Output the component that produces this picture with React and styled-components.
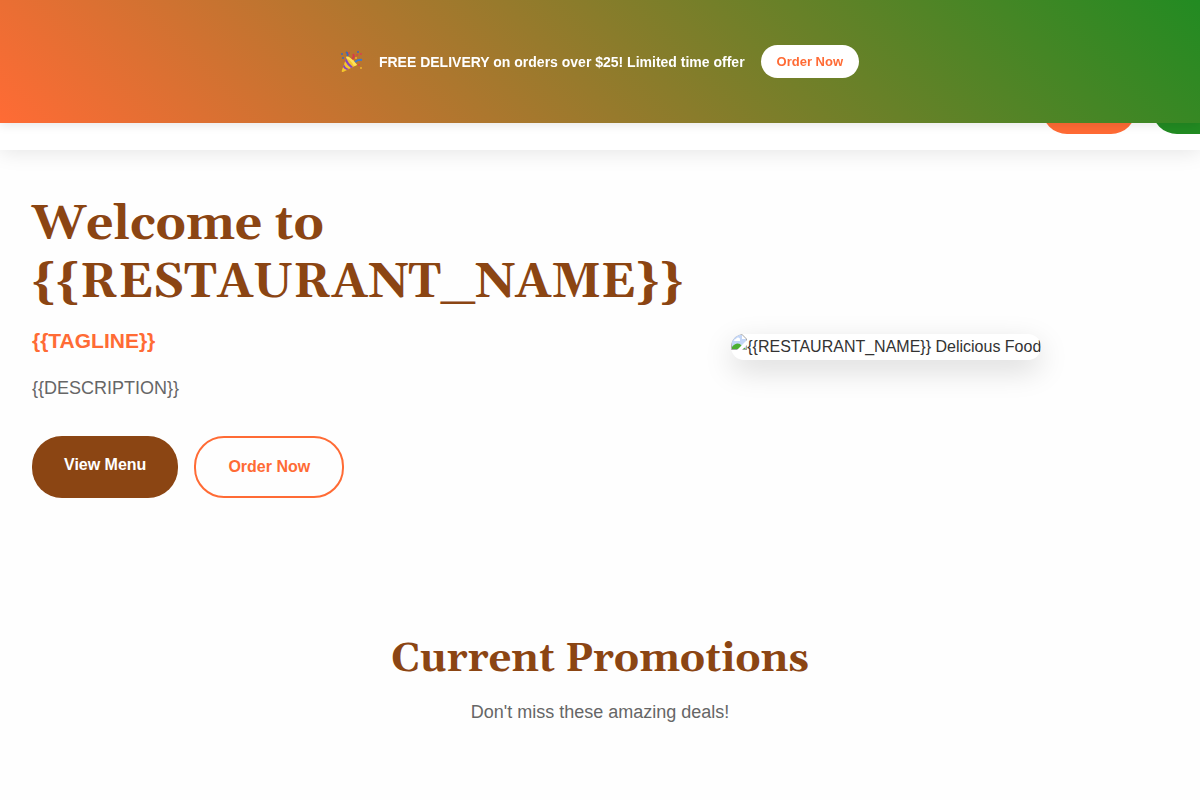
import React from "react";
import styled, { createGlobalStyle } from "styled-components";

const GlobalStyle = createGlobalStyle`
  * {
    box-sizing: border-box;
    margin: 0;
    padding: 0;
  }

  body {
    font-family: "Liberation Sans", Arial, sans-serif;
    font-size: 16px;
    line-height: 26px;
    color: #333;
    background: #fefefe;
    overflow-x: hidden;
  }
`;

const serif = `Georgia, Gelasio, "Liberation Serif", serif`;

const PromoBanner = styled.aside`
  position: fixed;
  top: 0;
  left: 0;
  right: 0;
  z-index: 20;
  display: flex;
  align-items: center;
  justify-content: center;
  gap: 16px;
  padding: 45px 16px;
  color: #fff;
  background: linear-gradient(45deg, #ff6b35, #228b22);
  box-shadow: 0 2px 10px rgba(0, 0, 0, 0.1);
`;

const PromoIcon = styled.svg`
  flex: none;
  width: 22px;
  height: 24px;
`;

const PromoText = styled.p`
  font-size: 14px;
  line-height: 24px;
  font-weight: 700;
`;

const PromoLink = styled.a`
  padding: 6px 16px;
  border-radius: 20px;
  font-size: 13px;
  line-height: 21px;
  font-weight: 700;
  text-decoration: none;
  color: #ff6b35;
  background: #fff;
`;

const Header = styled.header`
  position: relative;
  z-index: 10;
  display: flex;
  justify-content: flex-end;
  padding: 88px 0 16px;
  background: #fff;
  box-shadow: 0 2px 20px rgba(0, 0, 0, 0.1);
`;

const HeaderActions = styled.nav`
  display: flex;
  gap: 16px;
  margin-right: -46px;
`;

const HeaderLink = styled.a`
  width: 94px;
  height: 50px;
  margin-top: -4px;
  border-radius: 25px;
  background: ${({ $color }) => $color};
`;

const Hero = styled.section`
  display: grid;
  grid-template-columns: 1fr 1fr;
  align-items: center;
  gap: 48px;
  max-width: 1200px;
  margin: 0 auto;
  padding: 46px 32px 64px;
`;

const HeroTitle = styled.h1`
  margin-bottom: 12px;
  font-family: ${serif};
  font-size: 48px;
  line-height: 58px;
  font-weight: 700;
  color: #8b4513;
`;

const Tagline = styled.p`
  margin-bottom: 16px;
  font-size: 21px;
  line-height: 34px;
  font-weight: 700;
  color: #ff6b35;
`;

const Description = styled.p`
  margin-bottom: 34px;
  font-size: 18px;
  line-height: 28px;
  color: #666;
`;

const ButtonRow = styled.div`
  display: flex;
  gap: 16px;
`;

const ButtonLink = styled.a`
  padding: 16px 32px;
  border: ${({ $outline }) => ($outline ? "2px solid #ff6b35" : "none")};
  border-radius: 30px;
  font-weight: 700;
  text-decoration: none;
  color: ${({ $outline }) => ($outline ? "#ff6b35" : "#fff")};
  background: ${({ $outline }) => ($outline ? "transparent" : "#8b4513")};
`;

const HeroPicture = styled.figure`
  display: flex;
  justify-self: start;
  overflow: hidden;
  border-radius: 15px;
  white-space: nowrap;
  background: #fff;
  box-shadow: 0 10px 30px rgba(0, 0, 0, 0.15);
`;

const MissingImageIcon = styled.svg`
  flex: none;
  width: 16px;
  height: 16px;
`;

const Promotions = styled.section`
  padding: 66px 32px;
  text-align: center;
`;

const SectionTitle = styled.h2`
  margin-bottom: 6px;
  font-family: ${serif};
  font-size: 40px;
  line-height: 64px;
  font-weight: 700;
  color: #8b4513;
`;

const SectionText = styled.p`
  font-size: 18px;
  line-height: 28px;
  color: #666;
`;

function PartyPopper() {
  return (
    <PromoIcon viewBox="0 0 22 24" aria-hidden="true">
      <path d="M6 6Q13 9 16 15L2 22Q0 22 1 20Z" fill="#f5c62c" />
      <path d="M6 6Q12 9 16 15L13 16Q10 10 5 8Z" fill="#ffe05a" />
      <path d="M5 8Q7 13 12 17L10 18Q6 15 4 11Z" fill="#8a45b8" />
      <path d="M3 14Q4 18 8 19L6 20Q3 19 2 17Z" fill="#8a45b8" />
      <path d="M14 12Q17 9 21 10" fill="none" stroke="#3c78cf" strokeWidth="2" />
      <path d="M11 9Q14 7 12 4" fill="none" stroke="#d63c48" strokeWidth="2" />
      <path d="M6 6Q8 4 5 2" fill="none" stroke="#3c68bb" strokeWidth="2" />
      <g fill="#d8434c">
        <circle cx="8" cy="3" r="1" />
        <circle cx="16" cy="5" r="1" />
        <circle cx="20" cy="4" r="1" />
        <circle cx="18" cy="15" r="1" />
      </g>
      <g fill="#3c68bb">
        <circle cx="1" cy="4" r="1" />
        <circle cx="17" cy="2" r="1" />
        <circle cx="2" cy="8" r="1" />
      </g>
      <g fill="#efb52b">
        <circle cx="15" cy="8" r="1" />
        <circle cx="20" cy="18" r="1" />
      </g>
    </PromoIcon>
  );
}

export default function App() {
  return (
    <>
      <GlobalStyle />
      <PromoBanner>
        <PartyPopper />
        <PromoText>FREE DELIVERY on orders over $25! Limited time offer</PromoText>
        <PromoLink href="#order">Order Now</PromoLink>
      </PromoBanner>
      <Header>
        <HeaderActions>
          <HeaderLink href="#call" aria-label="Call" $color="#ff6b35" />
          <HeaderLink href="#order" aria-label="Order" $color="#228b22" />
        </HeaderActions>
      </Header>
      <main>
        <Hero>
          <div>
            <HeroTitle>Welcome to {"{{RESTAURANT_NAME}}"}</HeroTitle>
            <Tagline>{"{{TAGLINE}}"}</Tagline>
            <Description>{"{{DESCRIPTION}}"}</Description>
            <ButtonRow>
              <ButtonLink href="#menu">View Menu</ButtonLink>
              <ButtonLink href="#order" $outline>Order Now</ButtonLink>
            </ButtonRow>
          </div>
          <HeroPicture>
            <MissingImageIcon viewBox="0 0 16 16" aria-hidden="true">
              <path d="M0 0H11L16 5V16H0Z" fill="#a5a5a5" />
              <path d="M1 1H11V5H15V15H1Z" fill="#c3d6f7" />
              <path d="M11 1L15 5H11Z" fill="#fff" />
              <path d="M3 7a2 2 0 0 1 2-2a2 2 0 0 1 4 1v1Z" fill="#fff" />
              <path d="M1 15V13C4 9 8 8 11 12L15 15Z" fill="#4caf32" />
              <path d="M16 6L6 16H11L16 11Z" fill="#fff" />
            </MissingImageIcon>
            <figcaption>{"{{RESTAURANT_NAME}} Delicious Food"}</figcaption>
          </HeroPicture>
        </Hero>
        <Promotions>
          <SectionTitle>Current Promotions</SectionTitle>
          <SectionText>Don't miss these amazing deals!</SectionText>
        </Promotions>
      </main>
    </>
  );
}
